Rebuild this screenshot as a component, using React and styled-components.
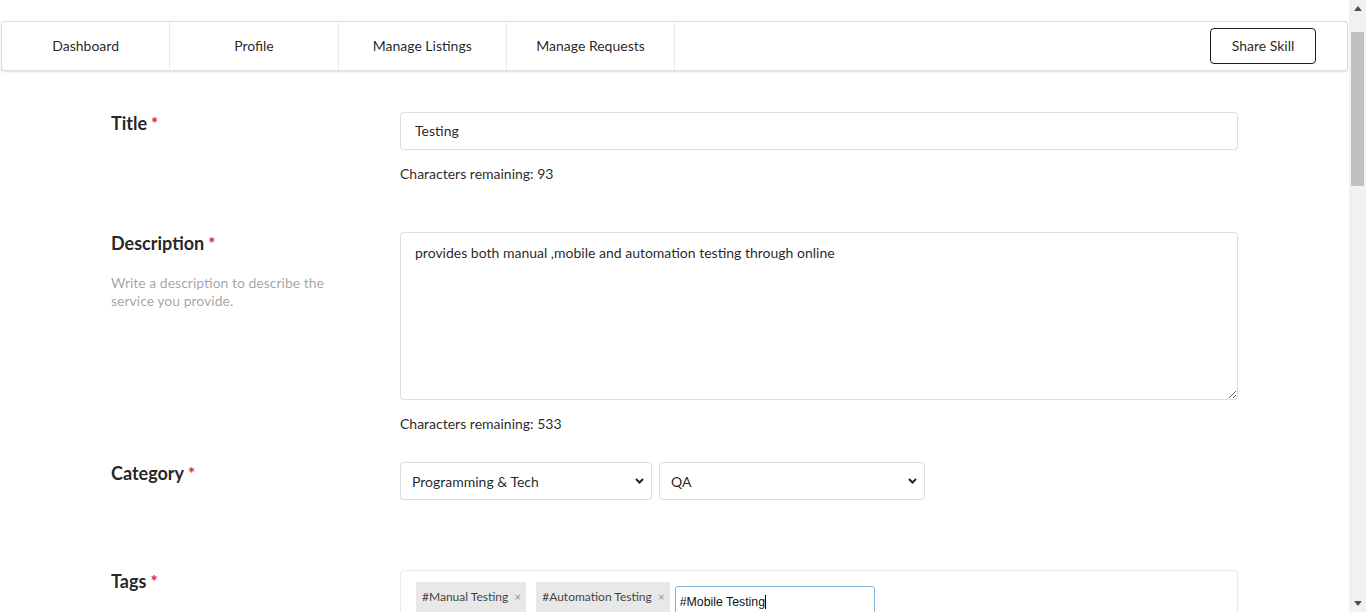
import React from 'react';
import styled, { createGlobalStyle } from 'styled-components';

const GlobalStyle = createGlobalStyle`
    html, body {
        margin: 0;
        padding: 0;
        height: 100%;
        overflow: hidden;
        background: #ffffff;
        font-family: Lato, "Open Sans", "Liberation Sans", sans-serif;
        color: rgba(0, 0, 0, 0.87);
        font-size: 14px;
    }
    * { box-sizing: border-box; }
`;

const Frame = styled.div`
    display: flex;
    height: 100vh;
    overflow: hidden;
`;

const Main = styled.div`
    flex: 1;
    min-width: 0;
    padding-top: 21px;
    overflow: hidden;
`;

const ScrollBar = styled.div`
    flex: 0 0 17px;
    display: flex;
    flex-direction: column;
    background: #f1f1f1;
`;

const ScrollButton = styled.div`
    height: 17px;
    display: flex;
    align-items: center;
    justify-content: center;
`;

const ScrollTrack = styled.div`
    flex: 1;
    padding: 15px 2px 0;
`;

const Thumb = styled.div`
    height: 154px;
    background: #c1c1c1;
`;

const Menu = styled.div`
    display: flex;
    align-items: stretch;
    height: 50px;
    margin: 0 1px;
    background: #fff;
    border: 1px solid rgba(34, 36, 38, 0.15);
    border-radius: 4px;
    box-shadow: 0 1px 2px 0 rgba(34, 36, 38, 0.15);
`;

const MenuItem = styled.div`
    flex: 0 0 168.3px;
    display: flex;
    align-items: center;
    justify-content: center;
    padding-bottom: 2px;
    font-size: 14px;
    color: rgba(0, 0, 0, 0.87);
    border-right: 1px solid rgba(34, 36, 38, 0.1);
`;

const MenuRight = styled.div`
    margin-left: auto;
    display: flex;
    align-items: center;
    padding-right: 31px;
`;

const ShareButton = styled.button`
    width: 106px;
    height: 36px;
    padding-bottom: 2px;
    background: #fff;
    border: 1px solid #1b1c1d;
    border-radius: 4px;
    font-family: Lato, "Liberation Sans", sans-serif;
    font-size: 14px;
    color: rgba(0, 0, 0, 0.87);
`;

const Container = styled.div`
    width: 1127px;
    margin: 41px auto 0;
`;

const Row = styled.div`
    display: grid;
    grid-template-columns: 289px 838px;
    margin-bottom: ${props => props.gap}px;
`;

const Label = styled.div`
    font-size: 18px;
    font-weight: 700;
    line-height: 23px;
    margin-top: -0.5px;
    color: rgba(0, 0, 0, 0.87);
`;

const Required = styled.span`
    color: #db2828;
    margin-left: 4px;
    font-size: 17px;
    vertical-align: top;
`;

const Helper = styled.div`
    margin-top: 19px;
    width: 230px;
    font-size: 14px;
    line-height: 18px;
    color: rgba(0, 0, 0, 0.38);
`;

const Field = styled.div`
    display: flex;
    flex-direction: column;
`;

const TextInput = styled.input`
    width: 100%;
    height: 38px;
    padding: 0 14px 2px;
    border: 1px solid rgba(34, 36, 38, 0.15);
    border-radius: 4px;
    font-family: Lato, "Liberation Sans", sans-serif;
    font-size: 14px;
    color: rgba(0, 0, 0, 0.87);
    outline: none;
`;

const TextArea = styled.textarea`
    width: 100%;
    height: 168px;
    padding: 11px 14px;
    border: 1px solid rgba(34, 36, 38, 0.15);
    border-radius: 4px;
    font-family: Lato, "Liberation Sans", sans-serif;
    font-size: 14px;
    line-height: 18px;
    color: rgba(0, 0, 0, 0.87);
    outline: none;
`;

const Counter = styled.div`
    margin-top: 15px;
    font-size: 14px;
    line-height: 18px;
    color: rgba(0, 0, 0, 0.87);
`;

const SelectRow = styled.div`
    display: flex;
    gap: 7px;
`;

const SelectWrap = styled.div`
    position: relative;
    width: ${props => props.width}px;
`;

const Select = styled.select`
    appearance: none;
    width: 100%;
    height: 38px;
    padding: 0 30px 0 11px;
    background: #fff;
    border: 1px solid rgba(34, 36, 38, 0.15);
    border-radius: 4px;
    font-family: Lato, "Liberation Sans", sans-serif;
    font-size: 14px;
    color: rgba(0, 0, 0, 0.87);
    outline: none;
`;

const Arrow = styled.svg`
    position: absolute;
    right: 8px;
    top: 16px;
    pointer-events: none;
`;

const TagBox = styled.div`
    display: flex;
    align-items: flex-start;
    gap: 10px;
    padding: 11px 15px 12px;
    border: 1px solid rgba(34, 36, 38, 0.1);
    border-radius: 4px;
`;

const Tag = styled.div`
    display: flex;
    align-items: center;
    height: 32px;
    padding: 0 5px 4px 6px;
    background: #e8e8e8;
    font-size: 12px;
    color: rgba(0, 0, 0, 0.75);
`;

const TagClose = styled.span`
    margin-left: 6px;
    font-size: 12px;
    color: rgba(0, 0, 0, 0.4);
`;

const TagInput = styled.div`
    display: flex;
    align-items: center;
    width: 200px;
    height: 32px;
    margin-top: 4px;
    margin-left: -5px;
    padding: 0 4px;
    border: 1px solid #85b7d9;
    border-radius: 3px;
    font-family: "Liberation Sans", Arial, sans-serif;
    font-size: 12.3px;
    color: #111;
`;

const Caret = styled.span`
    display: inline-block;
    width: 1px;
    height: 14px;
    background: #000;
`;

const Chevron = () => (
    <Arrow width="9" height="6" viewBox="0 0 9 6">
        <polyline points="1,1 4.5,4.5 8,1" fill="none" stroke="#222" strokeWidth="2" />
    </Arrow>
);

const App = () => {
    return <Frame>
        <GlobalStyle />
        <Main>
            <Menu>
                <MenuItem>Dashboard</MenuItem>
                <MenuItem>Profile</MenuItem>
                <MenuItem>Manage Listings</MenuItem>
                <MenuItem>Manage Requests</MenuItem>
                <MenuRight>
                    <ShareButton>Share Skill</ShareButton>
                </MenuRight>
            </Menu>
            <Container>
                <Row gap={49}>
                    <Label>Title<Required>*</Required></Label>
                    <Field>
                        <TextInput defaultValue="Testing" />
                        <Counter>Characters remaining: 93</Counter>
                    </Field>
                </Row>
                <Row gap={29}>
                    <div>
                        <Label>Description<Required>*</Required></Label>
                        <Helper>Write a description to describe the service you provide.</Helper>
                    </div>
                    <Field>
                        <TextArea defaultValue="provides both manual ,mobile and automation testing through online" />
                        <Counter>Characters remaining: 533</Counter>
                    </Field>
                </Row>
                <Row gap={70}>
                    <Label>Category<Required>*</Required></Label>
                    <SelectRow>
                        <SelectWrap width={252}>
                            <Select defaultValue="pt">
                                <option value="pt">Programming &amp; Tech</option>
                            </Select>
                            <Chevron />
                        </SelectWrap>
                        <SelectWrap width={266}>
                            <Select defaultValue="qa">
                                <option value="qa">QA</option>
                            </Select>
                            <Chevron />
                        </SelectWrap>
                    </SelectRow>
                </Row>
                <Row gap={40}>
                    <Label>Tags<Required>*</Required></Label>
                    <TagBox>
                        <Tag>#Manual Testing<TagClose>×</TagClose></Tag>
                        <Tag>#Automation Testing<TagClose>×</TagClose></Tag>
                        <TagInput>#Mobile Testing<Caret /></TagInput>
                    </TagBox>
                </Row>
            </Container>
        </Main>
        <ScrollBar>
            <ScrollButton>
                <svg width="8" height="5" viewBox="0 0 8 5"><polygon points="0,5 4,0 8,5" fill="#505050" /></svg>
            </ScrollButton>
            <ScrollTrack>
                <Thumb />
            </ScrollTrack>
            <ScrollButton>
                <svg width="8" height="5" viewBox="0 0 8 5"><polygon points="0,0 8,0 4,5" fill="#505050" /></svg>
            </ScrollButton>
        </ScrollBar>
    </Frame>
}

export default App;
